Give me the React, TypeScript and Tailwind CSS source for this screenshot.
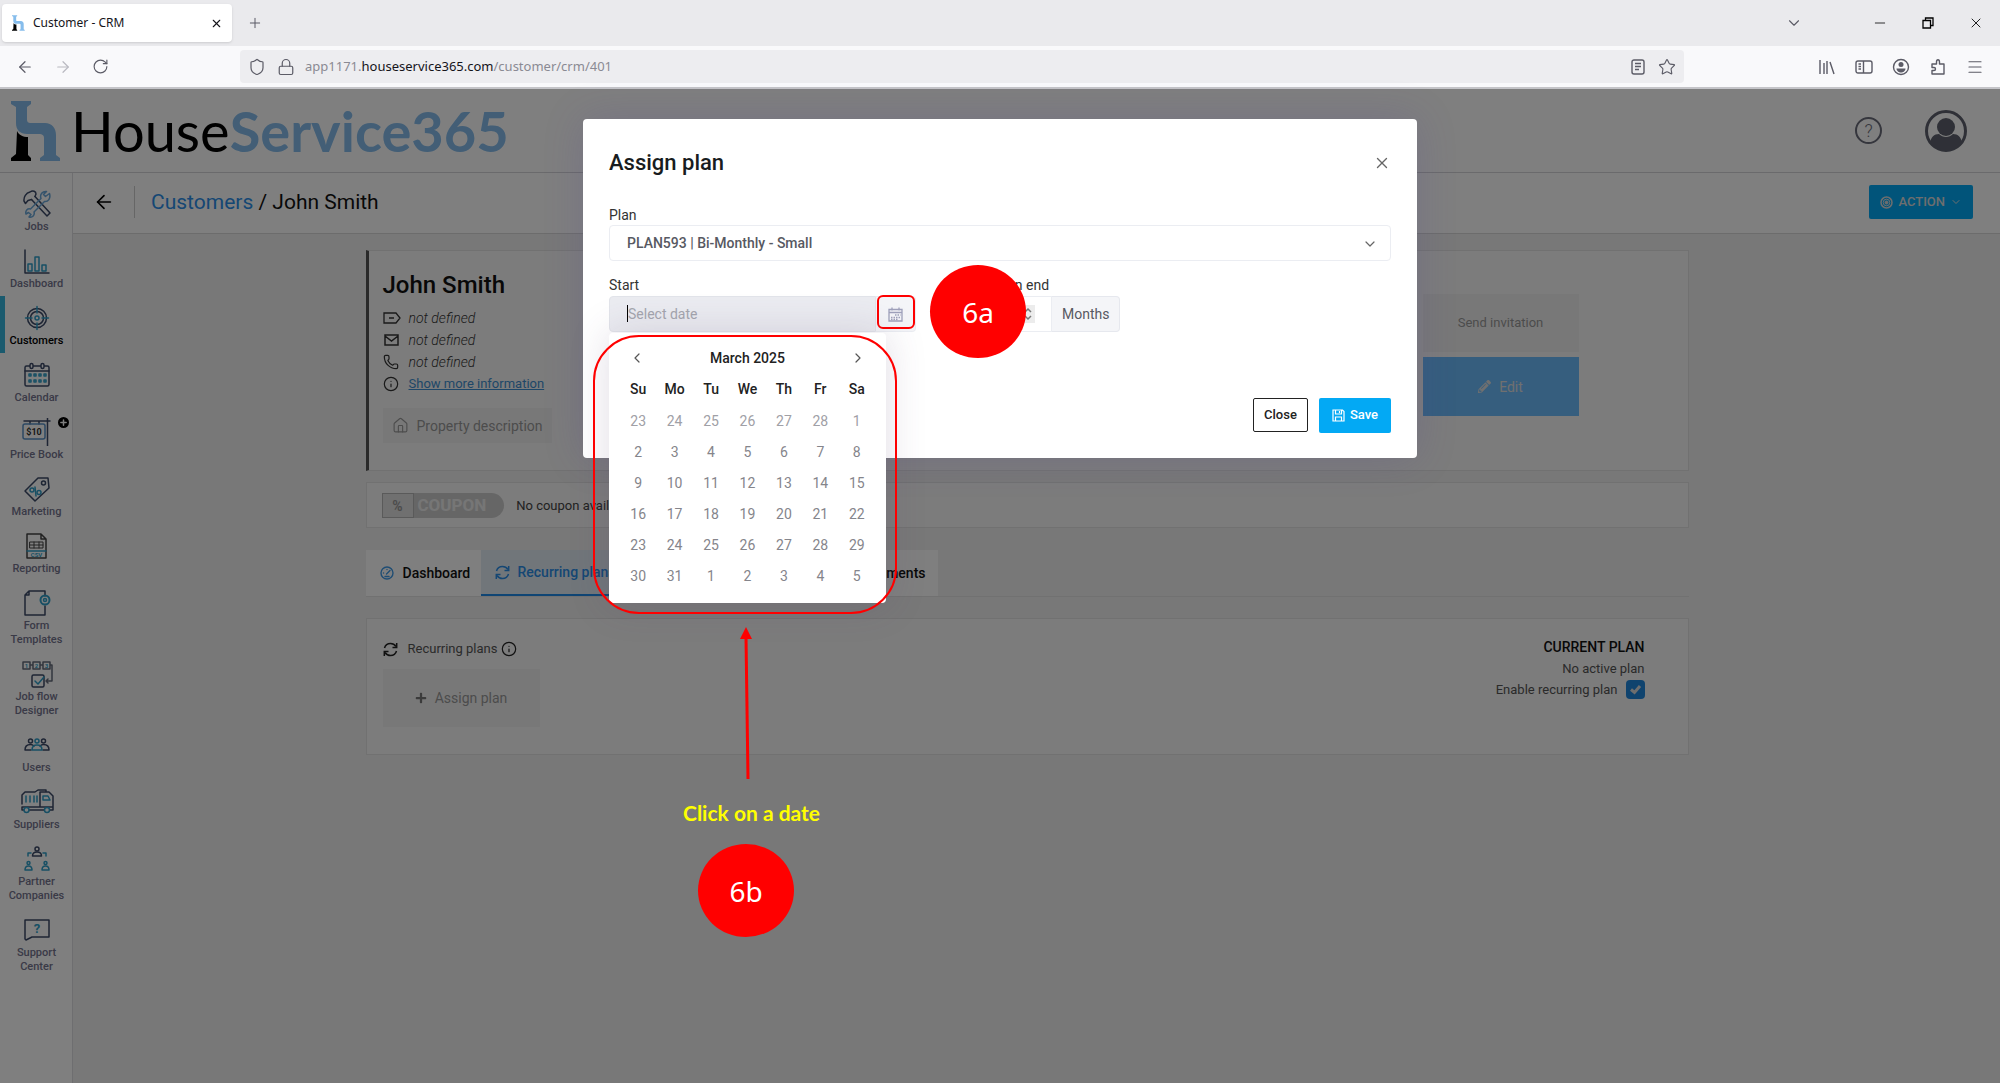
import React from 'react';
import {
  ArrowLeft,
  ArrowRight,
  RotateCw,
  Shield,
  Lock,
  Star,
  Plus,
  X,
  ChevronDown,
  ChevronLeft,
  ChevronRight,
  Minus,
  Menu,
  Phone,
  Info,
  House,
} from 'lucide-react';
import { FaPencilAlt, FaPlus } from 'react-icons/fa';

const NAVY = '#3c4a68';
const CYAN = '#2f9fc9';

interface NavItem {
  label: string;
  icon: React.ReactNode;
  active?: boolean;
  badge?: boolean;
}

const Icon: React.FC<{ children: React.ReactNode; w?: number }> = ({ children, w = 28 }) => (
  <svg width={w} height="28" viewBox={`0 0 ${w} 28`} fill="none" stroke={NAVY} strokeWidth="1.5" strokeLinejoin="round" strokeLinecap="round">
    {children}
  </svg>
);

const navItems: NavItem[] = [
  {
    label: 'Jobs',
    icon: (
      <Icon>
        <path d="M8.500 9.500 L24 26 L27 23 L12 6.500" />
        <path d="M8.500 9.500 L5 10.500 L2.500 13.500 L1 11 C0.500 7 3 3 7 2 C10 0 13 1.500 13 4 L12 6.500" />
        <path stroke="#6aa7d8" d="M26.500 3.500 L22.500 6.500 L20.500 4.500 L23.500 1.500 C19.500 1 16.500 4.500 18 8.500 L7.500 19 C4.500 18 2 21 3 24 L5.500 22.500 L8 24.500 L6 27 C9.500 28 12 25 11 22 L21.500 11.500 C25 12 28 8.500 26.500 3.500 Z" />
      </Icon>
    ),
  },
  {
    label: 'Dashboard',
    icon: (
      <Icon>
        <path d="M2 3 V26 H26" />
        <path stroke={CYAN} d="M5 24 V17 H9 V24 Z M12 24 V10 H16 V24 Z M19 24 V18 H23 V24 Z" />
      </Icon>
    ),
  },
  {
    label: 'Customers',
    active: true,
    icon: (
      <Icon>
        <circle cx="14" cy="14" r="9.500" />
        <circle cx="14" cy="14" r="6.500" />
        <circle cx="14" cy="14" r="2" stroke={CYAN} />
        <path stroke={CYAN} d="M14 2.500 V9 M14 19 V25.500 M2.500 14 H9 M19 14 H25.500" />
      </Icon>
    ),
  },
  {
    label: 'Calendar',
    icon: (
      <Icon>
        <rect x="2" y="5" width="24" height="20" rx="1.500" />
        <path d="M2 10 H26" />
        <rect x="7" y="2.500" width="3" height="5" rx="1.500" fill="#fff" />
        <rect x="18" y="2.500" width="3" height="5" rx="1.500" fill="#fff" />
        <path stroke={CYAN} d="M6 13 h2 v2 h-2z M11 13 h2 v2 h-2z M16 13 h2 v2 h-2z M21 13 h2 v2 h-2z M6 19 h2 v2 h-2z M11 19 h2 v2 h-2z M16 19 h2 v2 h-2z M21 19 h2 v2 h-2z" />
      </Icon>
    ),
  },
  {
    label: 'Price Book',
    badge: true,
    icon: (
      <Icon w={30}>
        <path d="M2 3 H28 M25.500 0 V28 M8 3 V6 M17 3 V6" />
        <rect x="1" y="6" width="22" height="15" rx="2" stroke="#5b93c8" />
        <text x="12" y="17" textAnchor="middle" fontSize="9" fontWeight="700" fontFamily="Roboto, sans-serif" fill="#333" stroke="none">$10</text>
      </Icon>
    ),
  },
  {
    label: 'Marketing',
    icon: (
      <Icon>
        <path d="M2 16 L15 3 L25 3 L26 13 L12 26 Z" />
        <circle cx="20.500" cy="8" r="2" />
        <circle cx="9" cy="15" r="2" stroke={CYAN} />
        <circle cx="16" cy="17.500" r="2" stroke={CYAN} />
        <path stroke={CYAN} d="M12 12 L13 21" />
      </Icon>
    ),
  },
  {
    label: 'Reporting',
    icon: (
      <Icon>
        <path stroke="#444" d="M4 2 H18 L23 7 V26 H4 Z M18 2 V7 H23" />
        <path stroke="#444" strokeWidth="1" d="M7 10 H20 V16 H7 Z M7 13 H20 M11 10 V16 M16 10 V16" />
        <path stroke={CYAN} d="M4 19 H23" />
        <text x="13.500" y="25" textAnchor="middle" fontSize="6" fontWeight="700" fontFamily="Roboto, sans-serif" fill={CYAN} stroke="none">CSV</text>
      </Icon>
    ),
  },
  {
    label: 'Form Templates',
    icon: (
      <Icon>
        <path d="M22 7 V2 H6 L2 6 V26 H22 V17 M6 2 V6 H2" />
        <circle cx="22" cy="11" r="4.500" stroke={CYAN} strokeWidth="2" />
        <circle cx="22" cy="11" r="1.500" stroke={CYAN} />
      </Icon>
    ),
  },
  {
    label: 'Job flow Designer',
    icon: (
      <Icon w={32}>
        <path stroke="#666c7c" d="M2 2 h7 v7 h-7z M12 2 h7 v7 h-7z M22 2 h7 v7 h-7z M9 5 h3 M19 5 h3 M29 5 h2 V21 H25 M27 19 L25 21 L27 23" />
        <rect x="11" y="15" width="12" height="12" rx="1.500" />
        <path stroke={CYAN} d="M14 21 L17 24 L23 17" />
        <g fontSize="6" fontWeight="700" fontFamily="Roboto, sans-serif" fill={CYAN} stroke="none" textAnchor="middle">
          <text x="5.500" y="8">1</text>
          <text x="15.500" y="8">2</text>
          <text x="25.500" y="8">3</text>
        </g>
      </Icon>
    ),
  },
  {
    label: 'Users',
    icon: (
      <Icon>
        <circle cx="7.500" cy="10" r="2" />
        <circle cx="20.500" cy="10" r="2" />
        <path d="M8 19 H2 C2 15 4 13.500 7.500 13.500 C9 13.500 10 14 11 15 M20 19 H26 C26 15 24 13.500 20.500 13.500 C19 13.500 18 14 17 15" />
        <circle cx="14" cy="10" r="2" stroke={CYAN} />
        <path stroke={CYAN} d="M9 19 C9 15.500 11 14 14 14 C17 14 19 15.500 19 19 Z" />
      </Icon>
    ),
  },
  {
    label: 'Suppliers',
    icon: (
      <Icon w={34}>
        <path d="M2 16 V7 L5 4 H15 L18 2 H26 V4 M20 19 V4 H29 L33 8 V22 H30 M2 19 H33 M9 22 H24 M2 19 V22 H4" />
        <path stroke={CYAN} d="M6 8 V14 M10 8 V14 M14 8 V14 M17 8 V14 M23 8 H28 L30 12 H23 Z" />
        <circle cx="6.500" cy="22" r="2.500" stroke={CYAN} />
        <circle cx="27" cy="22" r="2.500" stroke={CYAN} />
      </Icon>
    ),
  },
  {
    label: 'Partner Companies',
    icon: (
      <Icon>
        <circle cx="14" cy="4" r="2" />
        <path d="M9.500 11 C9.500 8 11 7 14 7 C17 7 18.500 8 18.500 11 Z" />
        <path stroke={CYAN} d="M8 8 H5 V11 M20 8 H23 V11" />
        <circle cx="5.500" cy="18" r="1.500" stroke={CYAN} />
        <path stroke={CYAN} d="M2 25 C2 22 3 21 5.500 21 C8 21 9 22 9 25 Z" />
        <circle cx="22.500" cy="18" r="1.500" stroke={CYAN} />
        <path stroke={CYAN} d="M19 25 C19 22 20 21 22.500 21 C25 21 26 22 26 25 Z" />
      </Icon>
    ),
  },
  {
    label: 'Support Center',
    icon: (
      <Icon>
        <path d="M2 4 H26 V21 H9 L3 24 L2 23 Z" />
        <text x="14" y="17" textAnchor="middle" fontSize="13" fontWeight="700" fontFamily="Roboto, sans-serif" fill={CYAN} stroke="none">?</text>
      </Icon>
    ),
  },
];

const weekDays = ['Su', 'Mo', 'Tu', 'We', 'Th', 'Fr', 'Sa'];

const weeks = [
  [23, 24, 25, 26, 27, 28, 1],
  [2, 3, 4, 5, 6, 7, 8],
  [9, 10, 11, 12, 13, 14, 15],
  [16, 17, 18, 19, 20, 21, 22],
  [23, 24, 25, 26, 27, 28, 29],
  [30, 31, 1, 2, 3, 4, 5],
];

const LogoMark: React.FC<{ className?: string }> = ({ className }) => (
  <svg className={className} viewBox="0 0 50 60">
    <path fill="#000" d="M6 30 C8 34 12 36 17 36 L17 54 L20 57 V60 H0 V57 L5 53 Z" />
    <path fill="#86bdec" d="M0 0 H20 V3 L16 6 V18 C16 21 17 22 20 22 H34 C41 22 45 27 45 34 V54 L49 57 V60 H29 V57 L33 54 V37 C33 34 31 33 28 33 H16 C9 33 5 29 5 22 V6 L0 3 Z" />
  </svg>
);

const SyncIcon: React.FC<{ className?: string }> = ({ className = '' }) => (
  <svg className={className} width="15" height="15" viewBox="0 0 15 15" fill="none" stroke="currentColor" strokeWidth="1.5">
    <path d="M1.500 6 C2.500 2.500 5 1.500 7.500 1.500 C10 1.500 12 3 13 4.500 M13.500 9 C12.500 12.500 10 13.500 7.500 13.500 C5 13.500 3 12 2 10.500" />
    <path d="M13.700 1 V5.500 H9.500 M1.300 14 V9.500 H5.500" />
  </svg>
);

const BrowserChrome: React.FC = () => (
  <div className="font-['Noto_Sans',sans-serif] text-[#5b5b66]">
    {/* Tab strip */}
    <div className="flex h-[46px] items-center bg-[#eaeaed] pl-[2px]">
      <div className="flex h-[38px] w-[230px] items-center rounded bg-white pl-[10px] pr-[9px] shadow">
        <LogoMark className="h-4 w-[13px]" />
        <span className="ml-2 flex-1 text-xs text-[#15141a]">Customer - CRM</span>
        <button aria-label="Close tab" className="text-[#15141a]"><X size={13} strokeWidth={2} /></button>
      </div>
      <button aria-label="New tab" className="ml-[15px]"><Plus size={16} strokeWidth={1.5} /></button>
      <div className="ml-auto flex items-center pr-4">
        <button aria-label="List tabs" className="mr-[69px]"><ChevronDown size={18} strokeWidth={1.5} /></button>
        <button aria-label="Minimize" className="mr-8 text-black"><Minus size={16} strokeWidth={1.2} /></button>
        <button aria-label="Restore" className="mr-8 text-black">
          <svg width="16" height="16" viewBox="0 0 16 16" fill="none" stroke="currentColor" strokeWidth="1.3">
            <path d="M3 5.500 H10.500 V13 H3 Z M5.500 5 V3 H13 V10.500 H11" />
          </svg>
        </button>
        <button aria-label="Close window" className="text-black"><X size={16} strokeWidth={1.3} /></button>
      </div>
    </div>
    {/* Address bar */}
    <div className="flex h-[43px] items-center border-b-2 border-[#c4c4c8] bg-[#f9f9fb]">
      <div className="flex w-60 items-center gap-[20px] pl-4">
        <button aria-label="Back"><ArrowLeft size={18} strokeWidth={1.6} /></button>
        <button aria-label="Forward" className="text-[#b9b9c0]"><ArrowRight size={18} strokeWidth={1.6} /></button>
        <button aria-label="Reload"><RotateCw size={17} strokeWidth={1.6} /></button>
      </div>
      <div className="flex h-[33px] flex-1 items-center rounded bg-[#ededf0] pl-2">
        <Shield size={18} strokeWidth={1.6} />
        <Lock size={18} strokeWidth={1.6} className="ml-[11px]" />
        <span className="ml-[10px] flex-1 text-[13px] text-[#8a8a93]">
          app1171.<span className="text-[#15141a]">houseservice365.com</span>/customer/crm/401
        </span>
        <svg width="16" height="16" viewBox="0 0 16 16" fill="none" stroke="currentColor" strokeWidth="1.4">
          <rect x="2" y="1" width="12" height="14" rx="2" />
          <path d="M5 4.500 H11 M5 7.500 H11 M5 10.500 H9" />
        </svg>
        <Star size={18} strokeWidth={1.5} className="ml-3 mr-2" />
      </div>
      <div className="flex w-[316px] items-center justify-end gap-[19px] pr-4">
        <svg width="18" height="18" viewBox="0 0 18 18" fill="none" stroke="currentColor" strokeWidth="1.4">
          <path d="M2 2 V16 M6 5 V16 M9 3 V16 M12 4 L16 16" />
        </svg>
        <svg width="18" height="18" viewBox="0 0 18 18" fill="none" stroke="currentColor" strokeWidth="1.4">
          <rect x="1" y="3" width="16" height="12" rx="2" />
          <path d="M8.500 3 V15 M3.500 6 H6 M3.500 8.500 H6 M3.500 11 H6" />
        </svg>
        <svg width="18" height="18" viewBox="0 0 18 18" fill="none" stroke="currentColor" strokeWidth="1.4">
          <circle cx="9" cy="9" r="7.500" />
          <circle cx="9" cy="6.500" r="2.500" fill="currentColor" stroke="none" />
          <path d="M4.500 10.500 H13.500 C13.500 13 11 14.500 9 14.500 C7 14.500 4.500 13 4.500 10.500 Z" fill="currentColor" stroke="none" />
        </svg>
        <svg width="18" height="18" viewBox="0 0 18 18" fill="none" stroke="currentColor" strokeWidth="1.4" strokeLinejoin="round">
          <path d="M3 16 V12.500 H5 C7 12.500 7 9.500 5 9.500 H3 V6 H7.500 V4 C7.500 1 10.500 1 10.500 4 V6 H15 V16 Z" />
        </svg>
        <Menu size={18} strokeWidth={1.6} />
      </div>
    </div>
  </div>
);

const Sidebar: React.FC = () => (
  <nav className="w-[73px] shrink-0 border-r border-[#dcdce0] bg-white pt-[9px]">
    {navItems.map((item) => (
      <a
        key={item.label}
        href="#"
        className={`relative flex flex-col items-center border-l-[5px] pt-2 pr-1 pb-[5px] text-center text-[11px] leading-[14px] font-medium ${
          item.active ? 'border-[#35b5dc] text-black' : 'border-transparent text-[#74748e]'
        }`}
      >
        {item.icon}
        <span className="mt-[2px] w-[60px]">{item.label}</span>
        {item.badge && (
          <span className="absolute top-[7px] right-[3px] flex size-[11px] items-center justify-center rounded-full bg-black text-white">
            <Plus size={9} strokeWidth={4} />
          </span>
        )}
      </a>
    ))}
  </nav>
);

const CustomerCard: React.FC = () => (
  <section className="flex justify-between border border-l-[3px] border-[#e2e2e2] border-l-[#555] bg-[#f8f8f8] pt-[14px] pr-[109px] pb-[27px] pl-[14px]">
    <div>
      <h2 className="text-2xl leading-10 font-medium text-[#111]">John Smith</h2>
      <ul className="mt-[2px] text-sm leading-[22px] text-[#333]">
        <li className="flex items-center gap-2">
          <svg width="18" height="12" viewBox="0 0 18 12" fill="none" stroke="currentColor" strokeWidth="1.3">
            <path d="M1 1 H13 L17 6 L13 11 H1 Z M6 6 H11" />
          </svg>
          <i className="font-light">not defined</i>
        </li>
        <li className="flex items-center gap-2">
          <svg width="18" height="12" viewBox="0 0 18 12" fill="none" stroke="currentColor" strokeWidth="1.5">
            <path d="M2 1 H15 V11 H2 Z M2 2 L8.500 7 L15 2" />
          </svg>
          <i className="font-light">not defined</i>
        </li>
        <li className="flex items-center gap-2"><Phone size={16} strokeWidth={1.8} className="mr-[2px]" /><i className="font-light">not defined</i></li>
        <li className="flex items-center gap-2">
          <Info size={16} strokeWidth={1.8} className="mr-[2px]" />
          <a href="#" className="text-[13px] text-[#3f8fd0] underline">Show more information</a>
        </li>
      </ul>
      <button className="mt-[13px] flex h-[35px] items-center gap-2 bg-[#f1f1f1] px-[9px] text-sm text-[#999]">
        <House size={17} strokeWidth={1.6} />
        Property description
      </button>
    </div>
    <div className="mt-[29px] flex w-[156px] flex-col gap-[5px] text-[13px]">
      <button className="h-[58px] bg-[#f1f1f1] text-[#999]">Send invitation</button>
      <button className="flex h-[59px] items-center justify-center gap-2 bg-[#6cbcfc] text-sm text-[#e0e0e0]">
        <FaPencilAlt size={13} />
        Edit
      </button>
    </div>
  </section>
);

const CouponBar: React.FC = () => (
  <section className="mt-[11px] flex h-[46px] items-center border border-[#e2e2e2] bg-[#f8f8f8] pt-px pl-[15px]">
    <span className="flex h-[25px] items-center overflow-hidden rounded-r-full bg-[#cdcdcd] font-bold">
      <span className="flex h-full w-8 items-center justify-center border border-[#b5b5b5] bg-[#e0e0e0] text-sm text-[#999]">%</span>
      <span className="pr-[18px] pl-1 text-[17px] text-[#ededed]">COUPON</span>
    </span>
    <span className="ml-3 text-[13px] text-[#444]">No coupon available</span>
  </section>
);

const Tabs: React.FC = () => (
  <div className="mt-[22px] flex h-[47px] border-b border-[#e2e2e2] text-sm font-medium text-[#111]">
    <button className="flex w-[115px] items-center gap-[9px] bg-white pl-[14px]">
      <svg width="14" height="14" viewBox="0 0 14 14" fill="none" stroke="#3f9be8" strokeWidth="1.4" strokeLinecap="round">
        <circle cx="7" cy="7" r="6" />
        <path d="M6.500 8 L10 4.500 M3.500 7 H3.600 M7 3.500 V3.600 M5 10.500 H9" />
      </svg>
      Dashboard
    </button>
    <button className="flex w-[150px] items-center gap-2 border-b-2 border-[#1f8ae8] bg-[#e3edf5] pl-[14px] text-[#2b8ee8]">
      <SyncIcon />
      Recurring plans
    </button>
    <button className="w-[307px] bg-white pr-3 text-right">Documents</button>
  </div>
);

const PlansCard: React.FC = () => (
  <section className="mt-[21px] flex h-[137px] justify-between border border-[#e2e2e2] bg-[#f8f8f8] pt-[18px] pr-[43px] pl-4 text-[13px] text-[#555]">
    <div>
      <div className="flex h-6 items-center">
        <SyncIcon className="mr-[10px] text-[#222]" />
        Recurring plans
        <Info size={16} strokeWidth={1.8} className="ml-1 text-[#222]" />
      </div>
      <button className="mt-2 flex h-[58px] w-[157px] items-center justify-center gap-2 bg-[#f1f1f1] text-sm text-[#999]">
        <FaPlus size={12} className="text-[#777]" />
        Assign plan
      </button>
    </div>
    <div className="text-right leading-[21px]">
      <div className="text-sm leading-[21px] font-medium text-[#111]">CURRENT PLAN</div>
      <div>No active plan</div>
      <label className="flex items-center justify-end gap-2">
        Enable recurring plan
        <span className="relative flex">
          <input type="checkbox" defaultChecked className="size-[19px] appearance-none rounded-sm bg-[#1f86dc]" />
          <svg className="pointer-events-none absolute inset-0 size-[19px]" viewBox="0 0 19 19" fill="none" stroke="#ddd" strokeWidth="3">
            <path d="M5 9.500 L8.500 12.500 L14 6" />
          </svg>
        </span>
      </label>
    </div>
  </section>
);

const DatePicker: React.FC = () => (
  <div className="absolute top-[37px] left-0 z-10 w-[277px] rounded bg-white px-[11px] pt-[9px] pb-3 text-sm shadow-[0_0_40px_rgba(82,63,105,0.18)]">
    <div className="flex h-[31px] items-center justify-between px-[9px] text-[#555]">
      <button aria-label="Previous month"><ChevronLeft size={16} strokeWidth={1.8} /></button>
      <span className="font-medium text-[#222]">March 2025</span>
      <button aria-label="Next month"><ChevronRight size={16} strokeWidth={1.8} /></button>
    </div>
    <table className="w-full table-fixed text-center">
      <thead>
        <tr className="h-8 text-[#222]">
          {weekDays.map((day) => (
            <th key={day} className="font-medium">{day}</th>
          ))}
        </tr>
      </thead>
      <tbody>
        {weeks.map((week, row) => (
          <tr key={row} className="h-[31px]">
            {week.map((day, col) => (
              <td key={col} className={row === 0 ? 'text-[#a0a0a6]' : 'text-[#85858b]'}>{day}</td>
            ))}
          </tr>
        ))}
      </tbody>
    </table>
  </div>
);

const AssignPlanModal: React.FC = () => (
  <div role="dialog" aria-label="Assign plan" className="h-[339px] w-[834px] rounded bg-white px-[26px] pt-[26px] text-sm text-[#333] shadow-[0_0_40px_rgba(82,63,150,0.2)]">
    <div className="flex h-9 items-center justify-between">
      <h1 className="text-[22px] font-medium text-[#181c20]">Assign plan</h1>
      <button aria-label="Close dialog" className="text-[#666]"><X size={18} strokeWidth={1.8} /></button>
    </div>
    <div className="relative mt-6">
      <label htmlFor="plan" className="block h-5 leading-5">Plan</label>
      <select id="plan" className="block h-9 w-full appearance-none rounded border border-[#ebedf2] bg-white px-[17px] font-medium text-[#575962]">
        <option>PLAN593 | Bi-Monthly - Small</option>
      </select>
      <ChevronDown size={16} strokeWidth={1.8} className="pointer-events-none absolute right-[13px] bottom-[9px] text-[#666]" />
    </div>
    <div className="mt-[14px] flex">
      <div className="w-[307px]">
        <label htmlFor="start" className="block h-5 leading-5">Start</label>
        <div className="relative mt-[1px] flex h-9">
          <input id="start" placeholder="Select date" className="min-w-0 flex-1 rounded-l border border-[#e2e4ea] bg-[#ebecf1] px-[18px] placeholder:text-[#a4a6ae]" />
          <span className="absolute top-[9px] left-[18px] h-[17px] w-px bg-black" />
          <button aria-label="Open calendar" className="flex w-10 items-center justify-center rounded-r border border-l-0 border-[#ebedf2] bg-[#f4f5f8] text-[#9fa1bb]">
            <svg width="15" height="15" viewBox="0 0 15 15" fill="none" stroke="currentColor" strokeWidth="1.3">
              <path d="M1 2.500 H14 V14 H1 Z M1 5.500 H14 M4 0.500 V3.500 M11 0.500 V3.500" />
              <path d="M7 8 H12.500 M3 10.500 H12.500 M3 12.500 H10" strokeDasharray="1.500 1" />
            </svg>
          </button>
          {/* Highlight round the calendar button */}
          <div className="absolute top-[-1px] right-px h-[34px] w-[38px] rounded-[6px] border-2 border-[#ff0000]" />
          <DatePicker />
        </div>
      </div>
      <div className="ml-[79px]">
        <label htmlFor="months" className="block h-5 leading-5">Plan end</label>
        <div className="mt-[1px] flex h-9 text-[#575962]">
          <span className="flex w-[57px] items-center justify-end border border-[#ebedf2] pr-4">
            <input id="months" className="w-4 min-w-0" />
            <svg width="14" height="18" viewBox="0 0 14 18" className="shrink-0 bg-[#ececec]" fill="none" stroke="#777" strokeWidth="1.5">
              <path d="M4 7 L7 4 L10 7 M4 11 L7 14 L10 11" />
            </svg>
          </span>
          <span className="flex items-center rounded-r border border-l-0 border-[#e6e8ee] bg-[#f4f5f8] px-[10px]">Months</span>
        </div>
      </div>
    </div>
    <div className="mt-[66px] flex justify-end gap-[11px] text-[13px] font-medium">
      <button className="h-[34px] rounded-xs border border-[#222] px-[10px] text-[#222]">Close</button>
      <button className="flex h-[35px] items-center gap-[5px] rounded-xs bg-[#03a9f4] px-[13px] text-white">
        <svg width="13" height="13" viewBox="0 0 13 13" fill="none" stroke="currentColor" strokeWidth="1.2">
          <path d="M1 1 H10.500 L12 2.500 V12 H1 Z M3.500 1 V5 H9.500 V1 M7.500 2 V4 M3.500 12 V8 H9.500 V12" />
        </svg>
        Save
      </button>
    </div>
  </div>
);

const Step: React.FC<{ label: string; className: string }> = ({ label, className }) => (
  <div className={`absolute z-20 flex h-[93px] w-24 items-center justify-center rounded-[50%] bg-[#ff0000] font-['Noto_Sans',sans-serif] text-[28px] text-white ${className}`}>
    {label}
  </div>
);

const App: React.FC = () => (
  <div className="flex min-h-screen flex-col font-[Roboto,sans-serif]">
    <BrowserChrome />
    <div className="relative flex flex-1 flex-col bg-[#f0f0f0]">
      <header className="flex h-[84px] items-center border-b border-[#d4d4d8] bg-white pr-[33px] pl-[11px]">
        <LogoMark className="h-[60px] w-[50px]" />
        <div className="ml-[10px] font-[Lato,sans-serif] text-[56px] leading-none text-black">
          House<span className="font-bold text-[#86bdec]">Service365</span>
        </div>
        <button aria-label="Help" className="mr-[43px] ml-auto flex size-[27px] items-center justify-center rounded-full border-2 border-[#6a6c7a] text-lg font-light text-[#6a6c7a]">?</button>
        <button aria-label="Account">
          <svg width="42" height="42" viewBox="0 0 42 42" fill="#5e616e">
            <circle cx="21" cy="21" r="19.500" fill="none" stroke="#5e616e" strokeWidth="3" />
            <circle cx="21" cy="17" r="9" />
            <path d="M5 33 C6 27 9 24 14 24 C18 28 24 28 28 24 C33 24 36 27 37 33 C33 38 27 41 21 41 C15 41 9 38 5 33 Z" />
          </svg>
        </button>
      </header>
      <div className="flex flex-1">
        <Sidebar />
        <div className="flex-1">
          <div className="flex h-[61px] items-center border-b border-[#d8d8d8] bg-white pr-[27px] pb-[2px] pl-5">
            <button aria-label="Go back"><ArrowLeft size={22} strokeWidth={1.8} /></button>
            <div className="mr-4 ml-[19px] h-8 w-px bg-[#ccc]" />
            <div className="text-[21px] leading-7 text-[#111]">
              <a href="#" className="text-[#2b8ee8]">Customers</a> / John Smith
            </div>
            <button className="ml-auto flex h-[34px] items-center gap-[5px] rounded-xs bg-[#03a9f4] px-[11px] text-[13px] font-medium text-[#ddd]">
              <svg width="13" height="13" viewBox="0 0 13 13" fill="none" stroke="currentColor">
                <circle cx="6.500" cy="6.500" r="5.500" strokeWidth="1.5" />
                <circle cx="6.500" cy="6.500" r="3.300" />
                <circle cx="6.500" cy="6.500" r="1.500" fill="currentColor" />
              </svg>
              ACTION
              <ChevronDown size={12} />
            </button>
          </div>
          <main className="pt-4 pr-[19px]">
            <div className="mx-auto max-w-[1323px]">
              <CustomerCard />
              <CouponBar />
              <Tabs />
              <PlansCard />
            </div>
          </main>
        </div>
      </div>

      {/* Backdrop with the dialog */}
      <div className="absolute inset-0 flex items-start justify-center bg-black/50 pt-[30px]">
        <AssignPlanModal />
      </div>

      {/* Walkthrough markers */}
      <div className="absolute top-[246px] left-1/2 z-20 ml-[-407px] h-[279px] w-[304px] rounded-[46px] border-2 border-[#ff0000]" />
      <Step label="6a" className="top-[176px] left-1/2 ml-[-70px]" />
      <svg className="absolute top-[538px] left-1/2 ml-[-260px]" width="14" height="152" viewBox="0 0 14 152">
        <path d="M6 10 L8 152" stroke="#ff0000" strokeWidth="3" />
        <path d="M6 0 L12 12 H0 Z" fill="#ff0000" />
      </svg>
      <div className="absolute top-[708px] left-1/2 ml-[-317px] font-[Lato,sans-serif] text-[21px] font-bold text-[#ffff00]">Click on a date</div>
      <Step label="6b" className="top-[755px] left-1/2 ml-[-302px]" />
    </div>
  </div>
);

export default App;
